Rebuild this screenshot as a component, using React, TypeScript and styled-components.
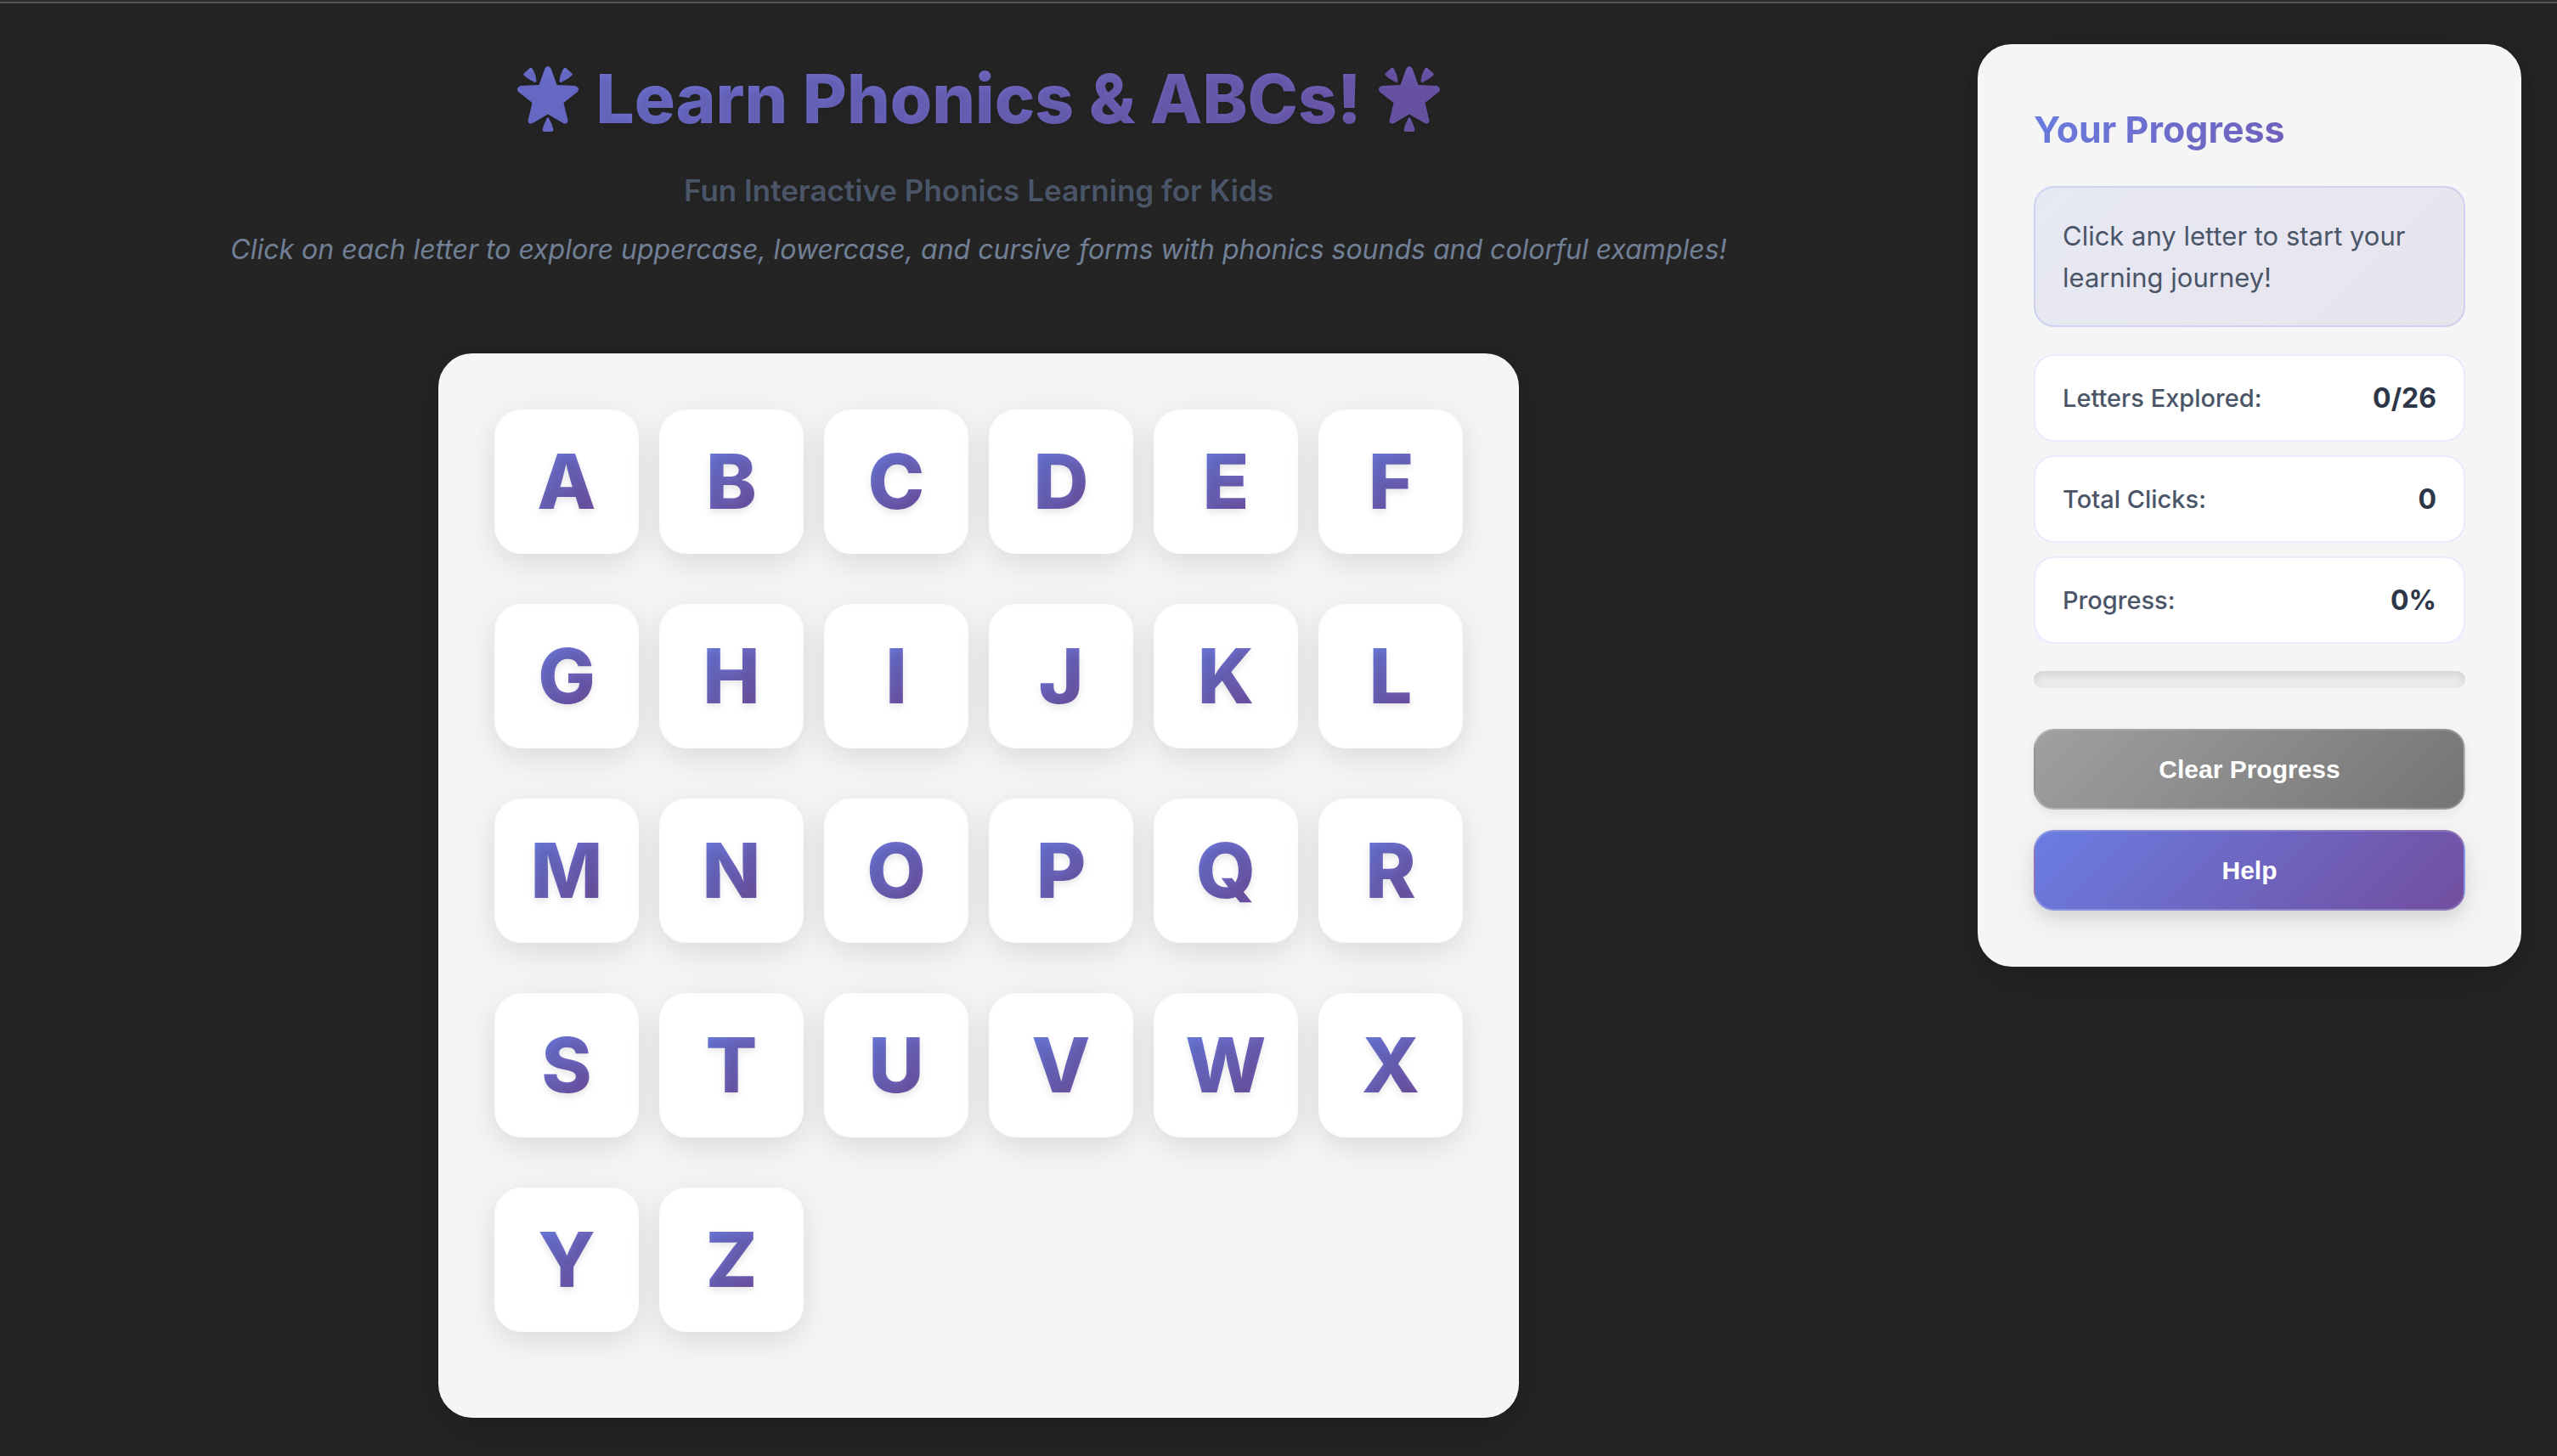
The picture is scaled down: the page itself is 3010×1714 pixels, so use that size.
import React from "react";
import styled, { createGlobalStyle, css } from "styled-components";

const GlobalStyle = createGlobalStyle`
  *, *::before, *::after { box-sizing: border-box; }
  body {
    margin: 0;
    min-height: 100vh;
    background: #242424;
    font-family: Inter, "Liberation Sans", sans-serif;
    color: #4a5568;
  }
  h1, h2, p, dl, dt, dd { margin: 0; }
`;

const brand = "linear-gradient(135deg, #6a7de2 0%, #724e9f 100%)";

const gradientText = css`
  background: ${brand};
  -webkit-background-clip: text;
  background-clip: text;
  -webkit-text-fill-color: transparent;
`;

const TopEdge = styled.div`
  height: 4px;
  background: #2d2d2d;
  border-bottom: 2px solid #555555;
`;

const Page = styled.div`
  display: flex;
  align-items: flex-start;
  gap: 66px;
  padding: 48px 42px;
  padding-bottom: 44px;
`;

const Main = styled.main`
  flex: 1;
  min-width: 0;
  display: flex;
  flex-direction: column;
  align-items: center;
  gap: 97px;
`;

const Header = styled.header`
  align-self: stretch;
  display: flex;
  flex-direction: column;
  gap: 16px;
  text-align: center;
`;

const Title = styled.h1`
  display: flex;
  justify-content: center;
  align-items: center;
  gap: 20px;
  font-size: 80px;
  line-height: 128px;
  font-weight: 800;
  text-shadow: 0 4px 8px rgba(0, 0, 0, 0.1);
  ${gradientText}
`;

const StarSvg = styled.svg`
  width: 72px;
  height: 77px;
  overflow: visible;
  filter: drop-shadow(0 4px 4px rgba(0, 0, 0, 0.1));
`;

const Subtitle = styled.p`
  font-size: 35px;
  line-height: 56px;
  font-weight: 600;
  color: #4a5568;
  text-shadow: 0 2px 4px rgba(0, 0, 0, 0.1);
`;

const Hint = styled.p`
  font-size: 32px;
  line-height: 51px;
  font-style: italic;
  color: #718096;
`;

const surface = css`
  background: #f5f5f5;
  border: 2px solid #f7f7f7;
  border-radius: 40px;
  padding: 64px;
  box-shadow: 0 16px 64px rgba(0, 0, 0, 0.12), 0 4px 16px rgba(0, 0, 0, 0.08);
`;

const Board = styled.section`
  ${surface}
  display: grid;
  grid-template-columns: repeat(6, 170px);
  gap: 24px;
`;

const Cell = styled.div`
  padding-bottom: 35px;
`;

const LetterCard = styled.button`
  display: flex;
  align-items: center;
  justify-content: center;
  width: 100%;
  height: 170px;
  padding: 0;
  border: 2px solid #fdfdfd;
  border-radius: 32px;
  background: #ffffff;
  font-family: inherit;
  cursor: pointer;
  box-shadow: 0 12px 32px rgba(0, 0, 0, 0.06), 0 8px 48px rgba(0, 0, 0, 0.06);
`;

const Glyph = styled.span`
  font-size: 90px;
  line-height: 90px;
  font-weight: 800;
  text-shadow: 0 4px 8px rgba(0, 0, 0, 0.1);
  ${gradientText}
`;

const Panel = styled.aside`
  ${surface}
  width: 640px;
  display: flex;
  flex-direction: column;
`;

const PanelTitle = styled.h2`
  font-size: 43px;
  line-height: 69px;
  font-weight: 700;
  margin-bottom: 32px;
  ${gradientText}
`;

const Message = styled.p`
  padding: 32px;
  border: 2px solid rgba(102, 126, 234, 0.2);
  border-radius: 24px;
  background: linear-gradient(135deg, rgba(102, 126, 234, 0.1), rgba(118, 75, 162, 0.1));
  font-size: 31px;
  line-height: 49px;
`;

const Stats = styled.dl`
  display: flex;
  flex-direction: column;
  gap: 16px;
  margin: 32px 0;
`;

const Stat = styled.div`
  display: flex;
  justify-content: space-between;
  align-items: center;
  padding: 24px 32px;
  border: 2px solid #e8ebfc;
  border-radius: 24px;
  background: #ffffff;
  line-height: 51px;
`;

const StatLabel = styled.dt`
  font-size: 29px;
  font-weight: 500;
`;

const StatValue = styled.dd`
  font-size: 32px;
  font-weight: 700;
  color: #2d3748;
`;

const Track = styled.div`
  height: 20px;
  border-radius: 10px;
  background: #e9eaec;
  box-shadow: inset 0 4px 8px rgba(0, 0, 0, 0.1);
  overflow: hidden;
`;

const Fill = styled.div`
  height: 100%;
  background: ${brand};
`;

const Actions = styled.div`
  display: flex;
  flex-direction: column;
  gap: 24px;
  margin-top: 48px;
`;

const Action = styled.button<{ $primary?: boolean }>`
  padding: 28px 32px;
  border: 2px solid rgba(255, 255, 255, 0.2);
  border-radius: 24px;
  background: ${(p) => (p.$primary ? brand : "linear-gradient(135deg, #a0a0a0, #747474)")};
  color: #ffffff;
  font-family: "Liberation Sans", Arial, sans-serif;
  font-size: 30px;
  line-height: 35px;
  font-weight: 600;
  cursor: pointer;
  box-shadow: ${(p) =>
    p.$primary
      ? "0 8px 16px rgba(0, 0, 0, 0.08), 0 12px 40px rgba(0, 0, 0, 0.08)"
      : "0 4px 12px rgba(0, 0, 0, 0.08)"};
`;

function Star({ id, from, to }: { id: string; from: string; to: string }) {
  return (
    <StarSvg viewBox="0 0 72 77" aria-hidden="true">
      <defs>
        <linearGradient id={id} x1="0" y1="0" x2="0" y2="1">
          <stop offset="0" stopColor={from} />
          <stop offset="0.4" stopColor={to} />
        </linearGradient>
      </defs>
      <g fill={`url(#${id})`}>
        <path d="M32.500 2.500Q36 -2.500 39.500 2.500L46.500 22L68 23Q74 25 71 30L54.500 43L59.500 64Q59 69 54 67L36 56.500L18 67Q13 69 12.500 64L17.500 43L1 30Q-2 25 4 23L25.500 22Z" />
        <path d="M7.500 8.500L15 2Q17 1 18 3.500Q21.500 9 22.500 17Q22 20 19.500 18.500Q13 15.500 8 11Q7 9.500 7.500 8.500Z" />
        <path d="M64.500 8.500L57 2Q55 1 54 3.500Q50.500 9 49.500 17Q50 20 52.500 18.500Q59 15.500 64 11Q65 9.500 64.500 8.500Z" />
        <path d="M34.500 62Q36 58.500 37.500 62Q41.500 69 42.500 75Q42.500 77 40 77H32Q29.500 77 29.500 75Q30.500 69 34.500 62Z" />
      </g>
    </StarSvg>
  );
}

const letters = "ABCDEFGHIJKLMNOPQRSTUVWXYZ".split("");

export default function App() {
  const explored = 0;
  const clicks = 0;
  const percent = Math.round((explored / letters.length) * 100);
  const stats = [
    ["Letters Explored:", `${explored}/${letters.length}`],
    ["Total Clicks:", `${clicks}`],
    ["Progress:", `${percent}%`],
  ];

  return (
    <>
      <GlobalStyle />
      <TopEdge />
      <Page>
        <Main>
          <Header>
            <Title>
              <Star id="star-start" from="#6c70d0" to="#6468c2" />
              Learn Phonics &amp; ABCs!
              <Star id="star-end" from="#6d59b0" to="#6551a0" />
            </Title>
            <Subtitle>Fun Interactive Phonics Learning for Kids</Subtitle>
            <Hint>
              Click on each letter to explore uppercase, lowercase, and cursive forms with phonics
              sounds and colorful examples!
            </Hint>
          </Header>
          <Board aria-label="Alphabet">
            {letters.map((letter) => (
              <Cell key={letter}>
                <LetterCard type="button">
                  <Glyph>{letter}</Glyph>
                </LetterCard>
              </Cell>
            ))}
          </Board>
        </Main>
        <Panel>
          <PanelTitle>Your Progress</PanelTitle>
          <Message>Click any letter to start your learning journey!</Message>
          <Stats>
            {stats.map(([label, value]) => (
              <Stat key={label}>
                <StatLabel>{label}</StatLabel>
                <StatValue>{value}</StatValue>
              </Stat>
            ))}
          </Stats>
          <Track role="progressbar" aria-label="Progress" aria-valuenow={percent}>
            <Fill style={{ width: `${percent}%` }} />
          </Track>
          <Actions>
            <Action type="button">Clear Progress</Action>
            <Action type="button" $primary>
              Help
            </Action>
          </Actions>
        </Panel>
      </Page>
    </>
  );
}
